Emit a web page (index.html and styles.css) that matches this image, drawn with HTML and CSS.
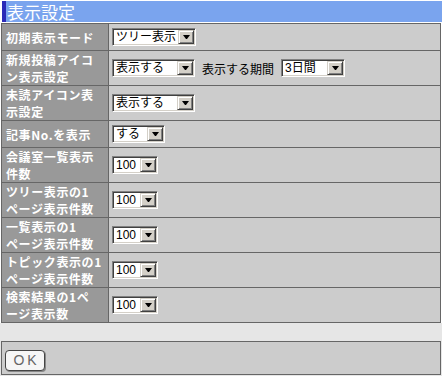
FILE: index.html
```html
<!DOCTYPE html>
<html>
<head>
  <meta charset="utf-8">
  <title>表示設定</title>
  <link rel="stylesheet" href="styles.css">
</head>
<body>
  <div class="title">表示設定</div>

  <div class="settings">
    <div class="label">初期表示モード</div>
    <div class="value">
      <span class="select w84"><span class="select-text">ツリー表示</span><span class="select-btn"></span></span>
    </div>

    <div class="label">新規投稿アイコ<br>ン表示設定</div>
    <div class="value">
      <span class="select w83"><span class="select-text">表示する</span><span class="select-btn"></span></span>
      <span class="inline-text">表示する期間</span>
      <span class="select w64"><span class="select-text">3日間</span><span class="select-btn"></span></span>
    </div>

    <div class="label">未読アイコン表<br>示設定</div>
    <div class="value">
      <span class="select w83"><span class="select-text">表示する</span><span class="select-btn"></span></span>
    </div>

    <div class="label">記事No.を表示</div>
    <div class="value">
      <span class="select w53"><span class="select-text">する</span><span class="select-btn"></span></span>
    </div>

    <div class="label">会議室一覧表示<br>件数</div>
    <div class="value">
      <span class="select w46"><span class="select-text">100</span><span class="select-btn"></span></span>
    </div>

    <div class="label">ツリー表示の1<br>ページ表示件数</div>
    <div class="value">
      <span class="select w46"><span class="select-text">100</span><span class="select-btn"></span></span>
    </div>

    <div class="label">一覧表示の1<br>ページ表示件数</div>
    <div class="value">
      <span class="select w46"><span class="select-text">100</span><span class="select-btn"></span></span>
    </div>

    <div class="label">トピック表示の1<br>ページ表示件数</div>
    <div class="value">
      <span class="select w46"><span class="select-text">100</span><span class="select-btn"></span></span>
    </div>

    <div class="label">検索結果の1ペ<br>ージ表示数</div>
    <div class="value">
      <span class="select w46"><span class="select-text">100</span><span class="select-btn"></span></span>
    </div>
  </div>

  <div class="footer">
    <div class="buttons">
      <button class="ok">OK</button>
    </div>
  </div>
</body>
</html>
```

FILE: styles.css
```css
body {
  margin: 0;
  padding-top: 1px;
  background-color: #fff;
  font-family: 'Noto Sans CJK JP', sans-serif;
}
.title {
  margin-left: 2px;
  margin-bottom: 1px;
  height: 21px;
  line-height: 21px;
  padding-left: 1px;
  border-left: 4px solid #2a2ab8;
  background-color: #7aa4ee;
  color: #fff;
  font-size: 17px;
}
.settings {
  display: grid;
  grid-template-columns: 107px 332px;
  width: 439px;
  margin-left: 1px;
  border-left: 1px solid #666;
  border-top: 1px solid #666;
}
.label,
.value {
  box-sizing: border-box;
  border-right: 1px solid #666;
  border-bottom: 1px solid #666;
  display: flex;
  align-items: center;
}
.label {
  min-height: 27px;
  padding: 0 2px 0 4px;
  background-color: #999;
  color: #fff;
  font-size: 12px;
  font-weight: bold;
  letter-spacing: 0.6px;
  line-height: 17px;
  white-space: nowrap;
}
.value {
  padding: 4px 3px;
  background-color: #ccc;
  font-size: 12px;
  line-height: 17px;
}
.inline-text {
  margin: 0 7px;
  color: #000;
}
.select {
  display: inline-flex;
  box-sizing: border-box;
  height: 18px;
  padding: 1px;
  border: 1px solid;
  border-color: #808080 #fff #fff #808080;
  box-shadow: inset 1px 1px #404040, inset -1px -1px #d4d0c8;
  background-color: #fff;
}
.w84 { width: 84px; }
.w83 { width: 83px; }
.w64 { width: 64px; }
.w53 { width: 53px; }
.w46 { width: 46px; }
.select-text {
  flex: 1;
  padding-left: 2px;
  line-height: 14px;
  font-family: 'Liberation Sans', 'Noto Sans CJK JP', sans-serif;
  font-size: 12px;
  color: #000;
  white-space: nowrap;
  overflow: hidden;
}
.select-btn {
  box-sizing: border-box;
  flex: none;
  width: 16px;
  height: 14px;
  display: flex;
  align-items: center;
  justify-content: center;
  background-color: #d4d0c8;
  border: 1px solid;
  border-color: #d4d0c8 #404040 #404040 #d4d0c8;
  box-shadow: inset 1px 1px #fff, inset -1px -1px #808080;
}
.select-btn::after {
  content: '';
  width: 1px;
  border-top: 4px solid #000;
  border-left: 3px solid transparent;
  border-right: 3px solid transparent;
}
.footer {
  padding: 18px 0 1px;
  background-color: #e6e6e6;
}
.buttons {
  box-sizing: border-box;
  width: 440px;
  height: 34px;
  margin-left: 1px;
  padding: 4px 3px;
  border: 1px solid #666;
  background-color: #ccc;
}
.ok {
  width: 40px;
  height: 21px;
  padding: 0;
  border: 1px solid #444;
  border-radius: 4px;
  background-color: #f6f6f6;
  box-shadow: 1px 1px 0 #888;
  color: #666;
  font-family: 'Liberation Sans', sans-serif;
  font-size: 14px;
  letter-spacing: 3px;
  text-indent: 3px;
}
```
